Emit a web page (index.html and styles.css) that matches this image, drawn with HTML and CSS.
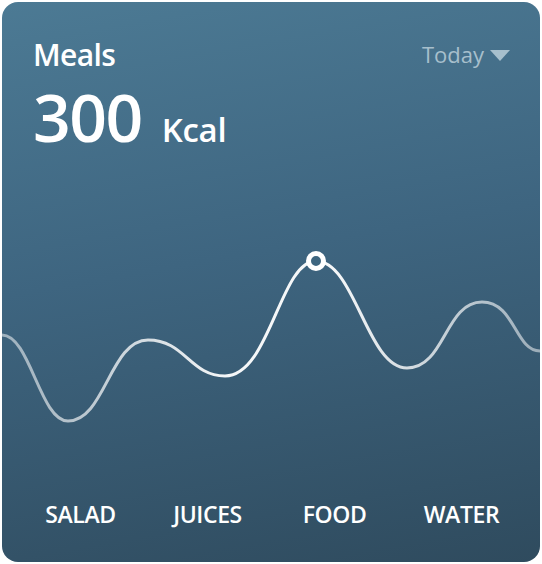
FILE: index.html
```html
<!DOCTYPE html>
<html>
<head>
<meta charset="utf-8">
<link rel="stylesheet" href="styles.css">
</head>
<body>
<div class="card">
  <div class="header">
    <div class="title">Meals</div>
    <div class="range">Today <span class="caret"></span></div>
  </div>
  <div class="total"><span class="num">300</span><span class="unit">Kcal</span></div>
  <svg class="chart" width="538" height="240" viewBox="0 0 538 240">
    <defs>
      <linearGradient id="lg" x1="0" y1="0" x2="538" y2="0" gradientUnits="userSpaceOnUse">
        <stop offset="0" stop-color="#ffffff" stop-opacity="0.5"/>
        <stop offset="0.42" stop-color="#ffffff" stop-opacity="0.95"/>
        <stop offset="0.62" stop-color="#ffffff" stop-opacity="0.95"/>
        <stop offset="1" stop-color="#ffffff" stop-opacity="0.5"/>
      </linearGradient>
    </defs>
    <path d="M 0 113 C 28 113, 38 199, 66 199 C 103 199, 108 118, 146 118 C 183 118, 188 154, 223 154 C 268 154, 278 39, 314 39 C 353 39, 365 146, 405 146 C 443 146, 443 80, 480 80 C 513 80, 513 129, 538 129" fill="none" stroke="url(#lg)" stroke-width="3" stroke-linecap="round"/>
    <circle cx="314" cy="39" r="7.5" fill="#3e6680" stroke="#ffffff" stroke-width="5"/>
  </svg>
  <div class="labels">
    <span>SALAD</span>
    <span>JUICES</span>
    <span>FOOD</span>
    <span>WATER</span>
  </div>
</div>
</body>
</html>
```
FILE: styles.css
```css
html, body {
  margin: 0;
  padding: 0;
  background: #ffffff;
}
body {
  padding: 2px;
  font-family: "Open Sans", "Noto Sans", sans-serif;
}
.card {
  width: 538px;
  height: 560px;
  border-radius: 16px;
  background: linear-gradient(170deg, #4c7a94 0%, #3e6580 45%, #2f4b5e 100%);
  color: #ffffff;
  display: flex;
  flex-direction: column;
  overflow: hidden;
}
.header {
  display: flex;
  justify-content: space-between;
  align-items: center;
  padding: 32px 30px 0 31px;
  height: 40px;
}
.title {
  font-size: 30px;
  font-weight: 600;
  letter-spacing: -0.6px;
}
.range {
  font-size: 22px;
  font-weight: 400;
  color: #a7bfcc;
  display: flex;
  align-items: center;
  gap: 6px;
}
.caret {
  width: 0;
  height: 0;
  border-left: 10px solid transparent;
  border-right: 10px solid transparent;
  border-top: 11px solid #a7bfcc;
  margin-top: 3px;
}
.total {
  display: flex;
  align-items: baseline;
  padding: 0 0 0 31px;
  height: 84px;
}
.num {
  font-size: 66px;
  font-weight: 600;
  letter-spacing: -1.5px;
  line-height: 84px;
}
.unit {
  font-size: 33px;
  font-weight: 600;
  margin-left: 20px;
  letter-spacing: -0.3px;
}
.chart {
  display: block;
  margin-top: 64px;
}
.labels {
  display: grid;
  grid-template-columns: repeat(4, 1fr);
  padding: 0 15px;
  margin-top: 36px;
  font-size: 23px;
  font-weight: 600;
  text-align: center;
  letter-spacing: -0.4px;
}
```
